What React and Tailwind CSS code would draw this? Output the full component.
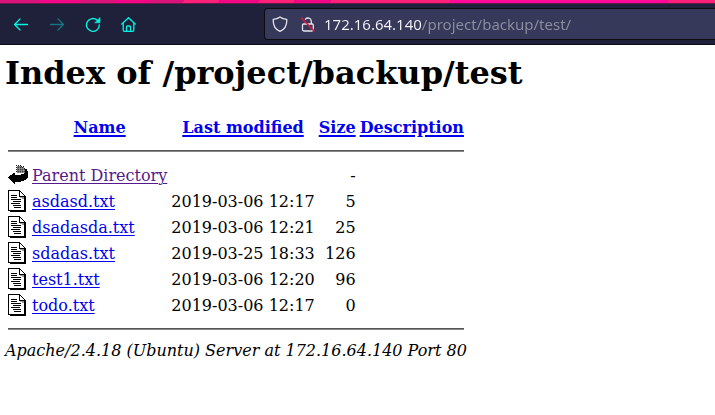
const files = [
  { name: 'asdasd.txt', modified: '2019-03-06 12:17', size: '5' },
  { name: 'dsadasda.txt', modified: '2019-03-06 12:21', size: '25' },
  { name: 'sdadas.txt', modified: '2019-03-25 18:33', size: '126' },
  { name: 'test1.txt', modified: '2019-03-06 12:20', size: '96' },
  { name: 'todo.txt', modified: '2019-03-06 12:17', size: '0' },
];

function BackIcon() {
  return (
    <svg width="20" height="22" viewBox="0 0 20 22" className="block" shapeRendering="crispEdges" role="img" aria-label="Parent directory">
      <path d="M9 2h5v1h2v1h1v1h1v1h1v4h-3v-1H9z" fill="#777" />
      <path d="M8 1.500h5M8 3.500h2M8 5.500h2M8 7.500h2M13 2.500h3M16 4.500h2" stroke="#222" strokeDasharray="1 1" />
      <path d="M10 3.500h6M10 5.500h8M10 7.500h7" stroke="#3c3c3c" strokeDasharray="1 1" />
      <path d="M11 4.500h5M11 6.500h7M11 8.500h6" stroke="#999" strokeDasharray="1 1" />
      <path d="M17 5h2v2h1v7h-1v1h-1v1h-2v1h-3v1H7v2H6v-1H5v-1H4v-1H3v-1H2v-1H1v-1H0v-1h1v-1h1v-1h2v-1h1v-1h2v2h6v-1h3v-1h1v-1h1V8h-1z" fill="#000" />
    </svg>
  );
}

function TextIcon() {
  return (
    <svg width="20" height="22" viewBox="0 0 20 22" className="block" shapeRendering="crispEdges" role="img" aria-label="Text file">
      <path d="M0 0h12v1h1v1h1v1h1v1h1v1h1v1h1v16H2v-1H0z" fill="#000" />
      <path d="M1 1h10v6h5v13H1z" fill="#fff" />
      <path d="M12 2h1v1h1v1h1v1h1v1h-4z" fill="#fff" />
      <path d="M12 7.500h4M14 8.500h2" stroke="#999" />
      <path d="M3 5.500h6M3 7.500h6M3 9.500h10M5 11.500h8M3 13.500h9M5 15.500h8M6 17.500h7" stroke="#000" />
    </svg>
  );
}

function Toolbar() {
  return (
    <header className="flex h-[41px] items-center border-b border-[#0c0c18] bg-[#1f2039] text-[#00f5e4]">
      <nav className="flex shrink-0 items-center gap-5 pl-[13px]" aria-label="Browser">
        <button aria-label="Back" className="flex h-8 w-4">
          <svg className="m-auto" width="16" height="16" viewBox="0 0 16 16" fill="none" stroke="currentColor" strokeWidth="1.3" strokeLinecap="round" strokeLinejoin="round"><path d="M14.500 8.500H1.500M7 3L1.500 8.500 7 14" /></svg>
        </button>
        <button aria-label="Forward" disabled className="flex h-8 w-4 text-[#13777f]">
          <svg className="m-auto" width="16" height="16" viewBox="0 0 16 16" fill="none" stroke="currentColor" strokeWidth="1.3" strokeLinecap="round" strokeLinejoin="round"><path d="M1.500 8.500h13M9 3l5.500 5.500L9 14" /></svg>
        </button>
        <button aria-label="Reload" className="flex h-8 w-4">
          <svg className="m-auto" width="16" height="16" viewBox="0 0 16 16" fill="none" stroke="currentColor" strokeWidth="1.4" strokeLinecap="round"><path d="M14.300 9A6.400 6.400 0 1 1 12.200 4.200" /><path d="M15 1.800v5h-5z" fill="currentColor" stroke="currentColor" strokeWidth=".6" strokeLinejoin="round" /></svg>
        </button>
        <button aria-label="Home" className="flex h-8 w-4">
          <svg className="m-auto" width="16" height="16" viewBox="0 0 16 16" fill="none" stroke="currentColor" strokeWidth="1.3" strokeLinecap="round" strokeLinejoin="round"><path d="M.800 8L7.500 1.700l6.700 6.300M2.200 7v7a1.300 1.300 0 0 0 1.300 1.300h8a1.300 1.300 0 0 0 1.300-1.300V7M5.500 15v-4a1 1 0 0 1 1-1h2a1 1 0 0 1 1 1v4" /></svg>
        </button>
      </nav>
      <div className="ml-[127px] flex h-8 min-w-0 flex-1 items-center rounded-l border border-r-0 border-[#0c0c14] bg-[#363959] pl-[7px] text-[#e4e4ee]">
        <svg className="shrink-0" width="16" height="16" viewBox="0 0 16 16" fill="none" stroke="currentColor" strokeWidth="1.3" strokeLinejoin="round"><path d="M8 1C6.500 2.200 4 3.200 1.200 3.400c-.2 5.500 1.800 9.800 6.800 12 5-2.200 7-6.500 6.800-12C12 3.200 9.500 2.200 8 1z" /></svg>
        <svg className="ml-3 shrink-0" width="16" height="16" viewBox="0 0 16 16" fill="none" stroke="currentColor" strokeWidth="1.3" strokeLinecap="round"><path d="M5.500 3.200A3.300 3.300 0 0 1 11.300 5v2.500M3.500 8h8.800a1 1 0 0 1 1 1v4.500A1.500 1.500 0 0 1 11.800 15H4a1.500 1.500 0 0 1-1.500-1.500V9a1 1 0 0 1 1-1z" /><path d="M1.500 2L14 15" stroke="#e0173f" strokeWidth="1.500" /></svg>
        <input
          type="text"
          aria-label="Address"
          defaultValue="172.16.64.140/project/backup/test/"
          className="ml-2 h-6 min-w-0 flex-1 bg-[linear-gradient(90deg,#f4f4fa_98px,#8b8da0_98px)] bg-clip-text font-['Noto_Sans',sans-serif] text-[15px] leading-5 text-transparent caret-white outline-none"
        />
      </div>
    </header>
  );
}

function Rule() {
  return (
    <tr>
      <td colSpan={5} className="p-px"><hr className="my-2 h-0.5 border-t border-b border-t-[#555] border-b-[#888]" /></td>
    </tr>
  );
}

function Heading({ children }) {
  return <th className="p-px font-bold"><a href="#sort" className="text-[#0000ee] underline decoration-2 underline-offset-2">{children}</a></th>;
}

export default function App() {
  return (
    <div className="min-h-screen bg-white">
      <div className="h-1 border-b border-[#6b1748] bg-[linear-gradient(120deg,#d9127c_35px,#f20686_35px_70px,#d9127c_70px_100px,#f20686_100px_130px,#d9127c_130px_160px,#ff2078_160px_190px,#f20686_190px_225px,#ff2078_225px_255px,#f20686_255px_287px,#ff2078_287px_390px,#ff0a98_390px_580px,#ff2078_580px)]" />
      <Toolbar />
      <main className="px-[5px] pt-2.5 font-['DejaVu_Serif',serif] text-base leading-[19px] text-black">
        <h1 className="mb-[21px] text-[32px] leading-[37px] font-bold">Index of /project/backup/test</h1>
        <table className="border-separate border-spacing-0.5">
          <thead>
            <tr>
              <th className="p-px"><div className="h-[22px] w-5" /></th>
              <Heading>Name</Heading>
              <Heading>Last modified</Heading>
              <Heading>Size</Heading>
              <Heading>Description</Heading>
            </tr>
          </thead>
          <tbody>
            <Rule />
            <tr>
              <td className="p-px"><BackIcon /></td>
              <td className="p-px"><a href="#parent" className="text-[#551a8b] underline decoration-1 underline-offset-2">Parent Directory</a></td>
              <td className="p-px" />
              <td className="p-px text-right">-</td>
              <td className="p-px" />
            </tr>
            {files.map((file) => (
              <tr key={file.name}>
                <td className="p-px"><TextIcon /></td>
                <td className="p-px"><a href={'#' + file.name} className="text-[#0000ee] underline decoration-1 underline-offset-2">{file.name}</a></td>
                <td className="p-px text-right whitespace-nowrap">{file.modified}</td>
                <td className="p-px text-right">{file.size}</td>
                <td className="p-px" />
              </tr>
            ))}
            <Rule />
          </tbody>
        </table>
        <address className="italic">Apache/2.4.18 (Ubuntu) Server at 172.16.64.140 Port 80</address>
      </main>
    </div>
  );
}
